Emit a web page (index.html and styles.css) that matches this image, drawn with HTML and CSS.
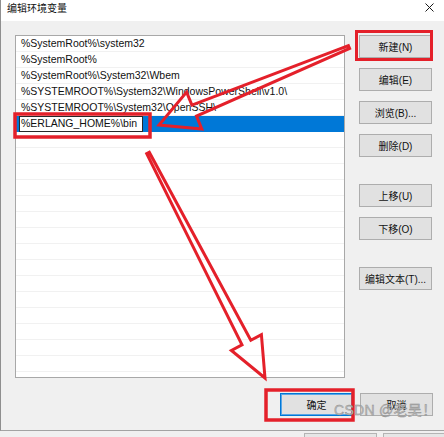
FILE: index.html
```html
<!DOCTYPE html>
<html lang="zh-CN">
<head>
<meta charset="utf-8">
<title>编辑环境变量</title>
<link rel="stylesheet" href="styles.css">
</head>
<body>
<div class="window">
  <div class="titlebar">
    <span class="title">编辑环境变量</span>
    <svg class="close" width="9" height="9" viewBox="0 0 9 9"><path d="M0.5 0.5L8.5 8.5M8.5 0.5L0.5 8.5" stroke="#1a1a1a" stroke-width="1" fill="none"/></svg>
  </div>
  <div class="content">
    <div class="main">
      <div class="list">
        <div class="row">%SystemRoot%\system32</div>
        <div class="row">%SystemRoot%</div>
        <div class="row">%SystemRoot%\System32\Wbem</div>
        <div class="row">%SYSTEMROOT%\System32\WindowsPowerShell\v1.0\</div>
        <div class="row">%SYSTEMROOT%\System32\OpenSSH\</div>
        <div class="row selected"><div class="edit">%ERLANG_HOME%\bin</div></div>
      </div>
      <div class="side">
        <button class="btn">新建(N)</button>
        <button class="btn">编辑(E)</button>
        <button class="btn">浏览(B)...</button>
        <button class="btn">删除(D)</button>
        <button class="btn gap">上移(U)</button>
        <button class="btn">下移(O)</button>
        <button class="btn gap">编辑文本(T)...</button>
      </div>
    </div>
    <div class="footer">
      <button class="btn default">确定</button>
      <button class="btn">取消</button>
    </div>
  </div>
</div>
<div class="behind">
  <div class="ghost"></div>
  <div class="ghost"></div>
</div>
<svg class="marks" width="444" height="437" viewBox="0 0 444 437">
  <g fill="none" stroke="#e4202a" stroke-linejoin="miter">
    <rect x="15" y="114" width="135" height="23" stroke-width="3.5"/>
    <rect x="356.5" y="31.5" width="75" height="28" stroke-width="3"/>
    <rect x="266" y="390" width="87" height="30" stroke-width="3.5"/>
    <polygon points="348.4,45.6 191.9,105.1 186.6,92.1 159,125 201.8,129.1 196.5,116.1 349.6,48.4" stroke-width="3"/>
    <polygon points="149.3,152.3 250.8,340.3 261.4,334.7 265,378 231.4,350.5 242,344.9 146.7,153.7" stroke-width="3"/>
  </g>
</svg>
<div class="watermark">CSDN @老吴！</div>
</body>
</html>
```
FILE: styles.css
```css
* { box-sizing: border-box; }
html, body { margin: 0; padding: 0; }
body {
  width: 444px;
  height: 437px;
  overflow: hidden;
  position: relative;
  background: #f0f0f0;
  font-family: "Liberation Sans", "Noto Sans CJK SC", sans-serif;
  color: #000;
}
.window {
  width: 444px;
  height: 431px;
  background: #f0f0f0;
  border-left: 1px solid #8f8f8f;
  border-bottom: 1px solid #a3a3a3;
}
.titlebar {
  height: 21px;
  background: #fff;
  display: flex;
  justify-content: space-between;
  align-items: flex-start;
  padding: 2px 10px 0 6px;
}
.title {
  font-family: "Noto Sans CJK SC", sans-serif;
  font-size: 10px;
  line-height: 12px;
  color: #111;
}
.close {
  margin-top: 1px;
}
.content {
  width: 432px;
  padding: 14px 0 0 14px;
}
.main {
  display: flex;
  align-items: flex-start;
}
.list {
  width: 330px;
  height: 343px;
  border: 1px solid #a8a8a8;
  background: #fff repeating-linear-gradient(to bottom, transparent 0 15px, #f1f1f1 15px 16px);
}
.row {
  height: 16px;
  line-height: 15px;
  padding-left: 5px;
  font-size: 10.5px;
  white-space: nowrap;
  overflow: hidden;
  color: #111;
}
.row.selected {
  background: #0078d7;
  padding-left: 3px;
}
.edit {
  width: 124px;
  height: 16px;
  background: #fff;
  border: 1px solid #2a2a2a;
  padding-left: 1px;
  line-height: 13px;
  font-size: 10.5px;
}
.side {
  margin-left: 14px;
  display: flex;
  flex-direction: column;
  gap: 10px;
}
.btn {
  width: 73px;
  height: 23px;
  padding: 0;
  margin: 0;
  background: #e1e1e1;
  border: 1px solid #adadad;
  font-family: "Liberation Sans", "Noto Sans CJK SC", sans-serif;
  font-size: 10px;
  color: #111;
  text-align: center;
}
.btn.gap { margin-top: 17px; }
.btn.default {
  border-color: #0078d7;
  box-shadow: inset 0 0 0 1px #5aa6e6;
}
.footer {
  display: flex;
  justify-content: flex-end;
  gap: 7px;
  margin-top: 15px;
}
.behind {
  height: 6px;
  display: flex;
  gap: 6px;
  padding: 2px 0 0 304px;
  overflow: hidden;
}
.ghost {
  flex: none;
  width: 73px;
  height: 12px;
  background: #e6e6e6;
  border: 1px solid #b4b4b4;
}
.marks {
  position: absolute;
  left: 0;
  top: 0;
}
.watermark {
  position: absolute;
  left: 334px;
  top: 401px;
  font-family: "Liberation Sans", "Noto Sans CJK SC", sans-serif;
  font-size: 14px;
  line-height: 18px;
  letter-spacing: 0.3px;
  color: #bdbdbd;
  -webkit-text-stroke: 0.4px #8a8a8a;
  white-space: nowrap;
}
```
